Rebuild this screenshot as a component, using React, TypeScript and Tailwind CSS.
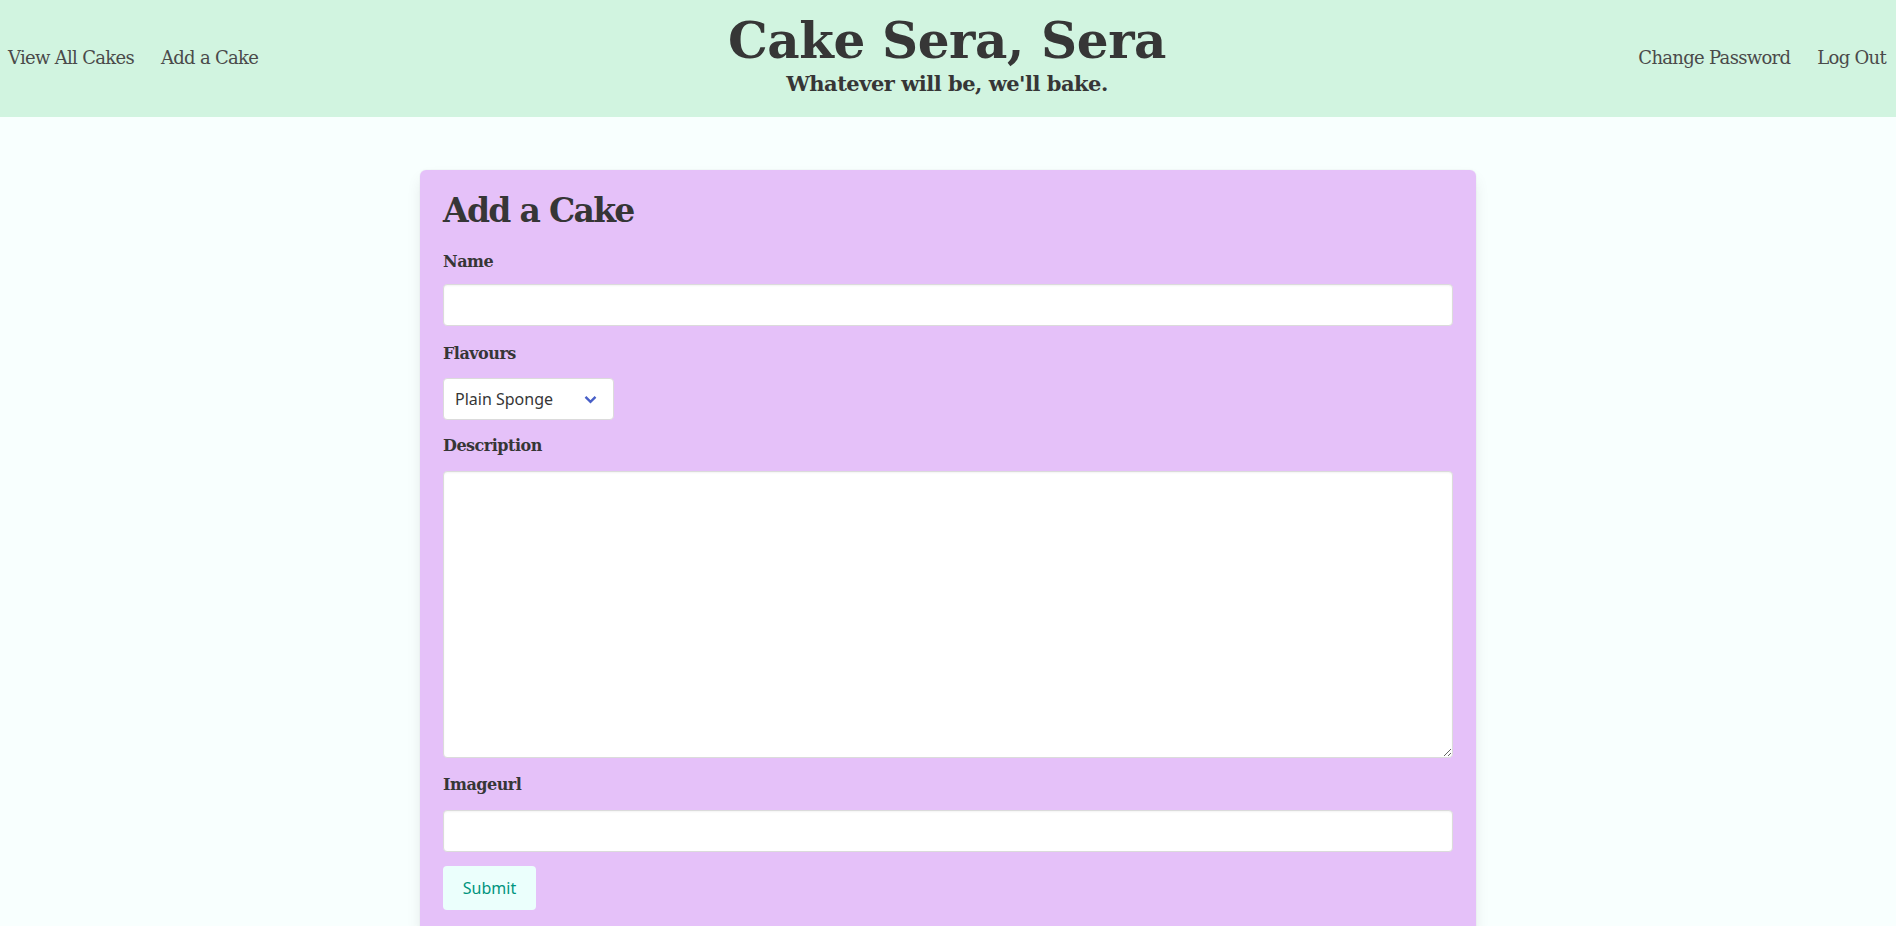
import React from 'react';

const serif = "font-['DejaVu_Serif',serif]";
const sans = "font-['Noto_Sans',sans-serif]";

interface FieldProps {
  label: string;
  children: React.ReactNode;
  className?: string;
  labelClassName?: string;
}

const Field: React.FC<FieldProps> = ({ label, children, className = '', labelClassName = 'mb-[10px]' }) => (
  <div className={className}>
    <label className={`block ${serif} text-[16px] leading-[24px] font-bold tracking-[-0.5px] text-[#363636] ${labelClassName}`}>
      {label}
    </label>
    {children}
  </div>
);

const inputCls =
  'block w-full h-[42px] bg-white border border-[#dbdbdb] rounded-[4px] shadow-[inset_0_1px_2px_rgba(10,10,10,0.05)] px-3 outline-none';

export default function App() {
  return (
    <div className="min-h-screen bg-[#f8fffe]">
      {/* ヘッダー */}
      <header className="h-[117px] bg-[#d1f4e0] flex items-center">
        <nav className={`flex-1 flex items-center gap-[27px] pl-[8px] ${serif} text-[18px] text-[#4a4a4a] tracking-[-0.7px] -mt-[2px]`}>
          <a>View All Cakes</a>
          <a>Add a Cake</a>
        </nav>
        <div className="flex flex-col items-center gap-[6px] text-[#363636] -mt-[8px]">
          <h1 className={`${serif} text-[50px] leading-[52px] font-bold tracking-[-0.4px]`}>Cake Sera, Sera</h1>
          <p className={`${serif} text-[21px] leading-[22px] font-bold tracking-[-0.5px]`}>Whatever will be, we'll bake.</p>
        </div>
        <nav className={`flex-1 flex items-center justify-end gap-[27px] pr-[10px] ${serif} text-[18px] text-[#4a4a4a] tracking-[-0.7px] -mt-[2px]`}>
          <a>Change Password</a>
          <a>Log Out</a>
        </nav>
      </header>

      <main className="pt-[53px]">
        <div className="w-[1056px] mx-auto bg-[#e5c1f9] rounded-[6px] px-[23px] pt-[21px] pb-[22px] shadow-[0_8px_16px_-2px_rgba(10,10,10,0.1),0_0_0_1px_rgba(10,10,10,0.02)]">
          <h2 className={`${serif} text-[33px] leading-[40px] font-bold text-[#363636] mb-[19px] tracking-[-1.7px]`}>Add a Cake</h2>

          <Field label="Name" className="mb-[16px]" labelClassName="mb-[10px]">
            <input className={inputCls} />
          </Field>

          <Field label="Flavours" className="mb-[14px]" labelClassName="mb-[12px]">
            <div className="relative w-[171px]">
              <select className={`${sans} appearance-none w-full h-[42px] bg-white border border-[#dbdbdb] rounded-[4px] pl-[11px] pr-8 text-[16px] text-[#363636] outline-none`}>
                <option>Plain Sponge</option>
              </select>
              <svg
                className="absolute right-[17px] top-[17px] pointer-events-none"
                width="13"
                height="9"
                viewBox="0 0 13 9"
                fill="none"
              >
                <path d="M1.5 1.8 L6.5 6.8 L11.5 1.8" stroke="#485fc7" strokeWidth="2.4" />
              </svg>
            </div>
          </Field>

          <Field label="Description" className="mb-[15px]" labelClassName="mb-[13px]">
            <textarea className="block w-full h-[287px] bg-white border border-[#dbdbdb] rounded-[4px] shadow-[inset_0_1px_2px_rgba(10,10,10,0.05)] p-3 outline-none" />
          </Field>

          <Field label="Imageurl" className="mb-[14px]" labelClassName="mb-[13px]">
            <input className={inputCls} />
          </Field>

          <button className={`${sans} h-[44px] w-[93px] bg-[#ebfffc] text-[#00947e] text-[16px] rounded-[4px]`}>
            Submit
          </button>
        </div>
      </main>
    </div>
  );
}
